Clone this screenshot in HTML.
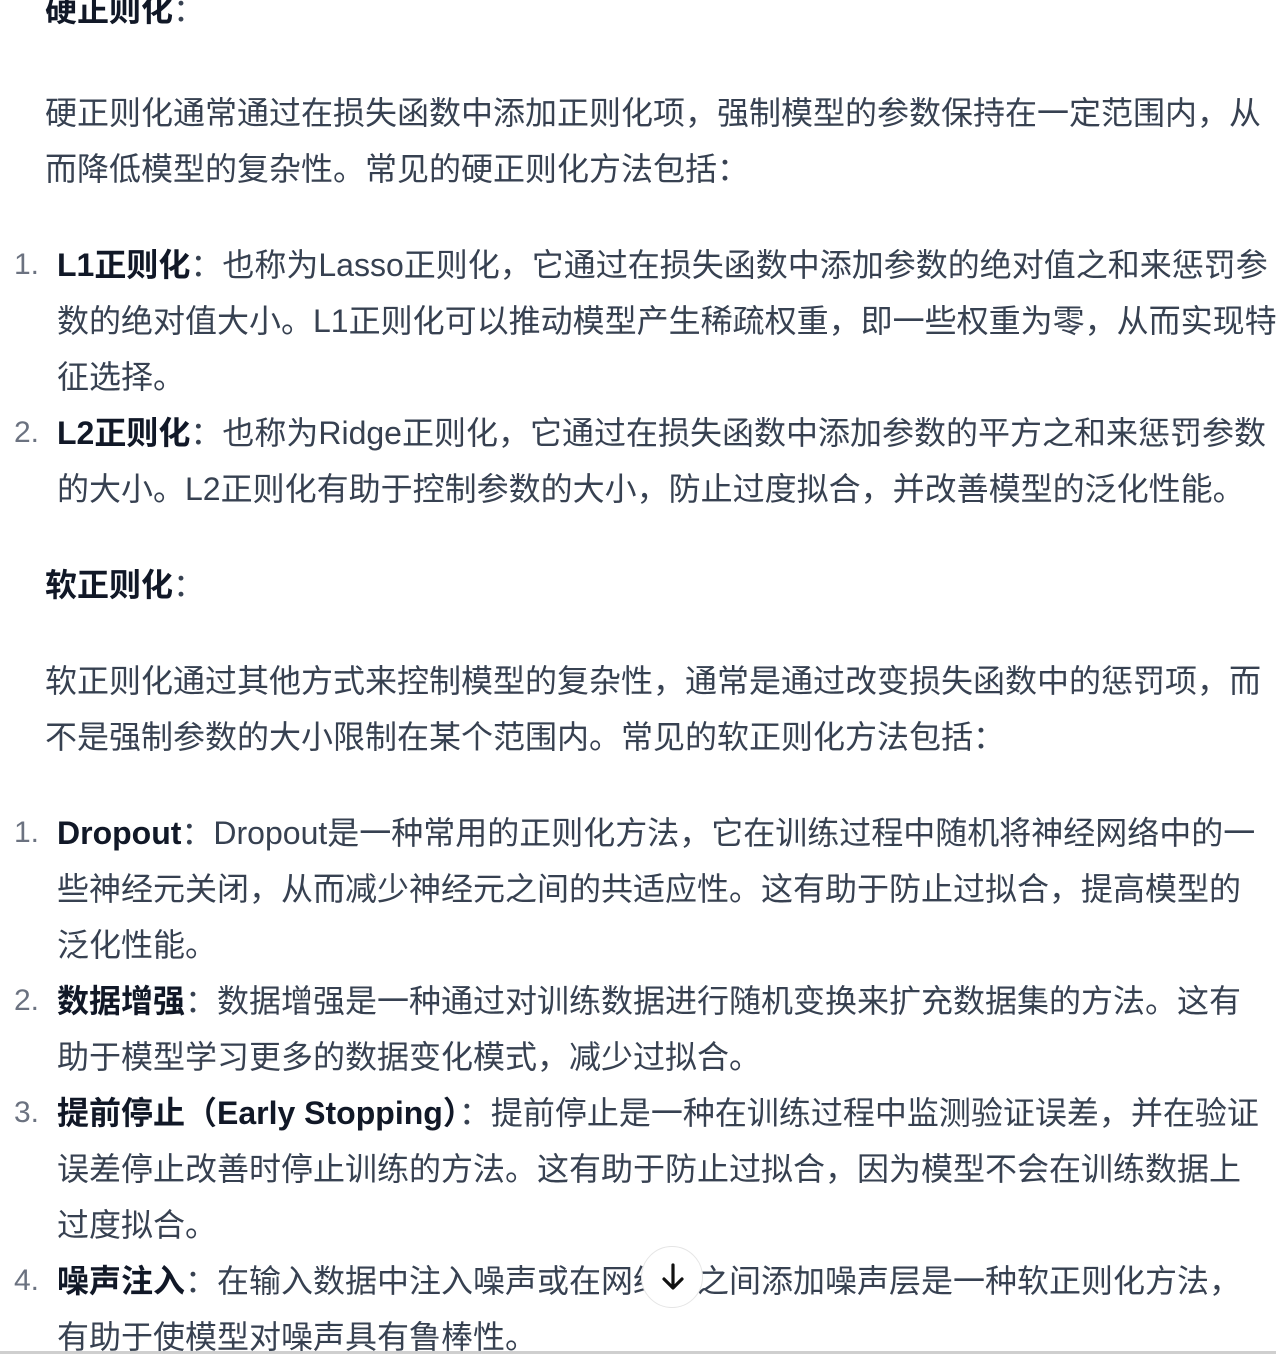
<!DOCTYPE html>
<html><head><meta charset="utf-8"><style>
html,body{margin:0;padding:0;background:#fff;width:1276px;height:1354px;overflow:hidden;position:relative}
.l{position:absolute;white-space:nowrap;height:56px;line-height:56px;font-size:32px;color:#374151;font-family:"Liberation Sans","Noto Sans CJK SC",sans-serif}
b{color:#111827;font-weight:700}
.n{position:absolute;left:14px;height:56px;line-height:56px;font-size:30px;color:#6b7280;font-family:"Liberation Sans",sans-serif}
.p{left:45px}.i{left:57px}
</style></head><body>
<div class="l p" style="top:-18px"><b>硬正则化</b>：</div>
<div class="l p" style="top:85px">硬正则化通常通过在损失函数中添加正则化项，强制模型的参数保持在一定范围内，从</div>
<div class="l p" style="top:141px">而降低模型的复杂性。常见的硬正则化方法包括：</div>
<div class="n" style="top:237px">1.</div>
<div class="l i" style="top:237px"><b>L1正则化</b>：也称为Lasso正则化，它通过在损失函数中添加参数的绝对值之和来惩罚参</div>
<div class="l i" style="top:293px">数的绝对值大小。L1正则化可以推动模型产生稀疏权重，即一些权重为零，从而实现特</div>
<div class="l i" style="top:349px">征选择。</div>
<div class="n" style="top:405px">2.</div>
<div class="l i" style="top:405px"><b>L2正则化</b>：也称为Ridge正则化，它通过在损失函数中添加参数的平方之和来惩罚参数</div>
<div class="l i" style="top:461px">的大小。L2正则化有助于控制参数的大小，防止过度拟合，并改善模型的泛化性能。</div>
<div class="l p" style="top:557px"><b>软正则化</b>：</div>
<div class="l p" style="top:653px">软正则化通过其他方式来控制模型的复杂性，通常是通过改变损失函数中的惩罚项，而</div>
<div class="l p" style="top:709px">不是强制参数的大小限制在某个范围内。常见的软正则化方法包括：</div>
<div class="n" style="top:805px">1.</div>
<div class="l i" style="top:805px"><b>Dropout</b>：Dropout是一种常用的正则化方法，它在训练过程中随机将神经网络中的一</div>
<div class="l i" style="top:861px">些神经元关闭，从而减少神经元之间的共适应性。这有助于防止过拟合，提高模型的</div>
<div class="l i" style="top:917px">泛化性能。</div>
<div class="n" style="top:973px">2.</div>
<div class="l i" style="top:973px"><b>数据增强</b>：数据增强是一种通过对训练数据进行随机变换来扩充数据集的方法。这有</div>
<div class="l i" style="top:1029px">助于模型学习更多的数据变化模式，减少过拟合。</div>
<div class="n" style="top:1085px">3.</div>
<div class="l i" style="top:1085px"><b>提前停止（Early Stopping）</b>：提前停止是一种在训练过程中监测验证误差，并在验证</div>
<div class="l i" style="top:1141px">误差停止改善时停止训练的方法。这有助于防止过拟合，因为模型不会在训练数据上</div>
<div class="l i" style="top:1197px">过度拟合。</div>
<div class="n" style="top:1253px">4.</div>
<div class="l i" style="top:1253px"><b>噪声注入</b>：在输入数据中注入噪声或在网络层之间添加噪声层是一种软正则化方法，</div>
<div class="l i" style="top:1309px">有助于使模型对噪声具有鲁棒性。</div>
<div style="position:absolute;left:641px;top:1246px;width:62px;height:62px;border-radius:50%;background:#fff;border:1px solid #e5e5e5;box-sizing:border-box">
<svg width="60" height="60" viewBox="0 0 60 60" style="position:absolute;left:0;top:0"><path d="M31 18v22M22 32l9 9 9-9" fill="none" stroke="#111" stroke-width="3.2" stroke-linecap="round" stroke-linejoin="round"/></svg></div>
<div style="position:absolute;left:0;top:1351px;width:1276px;height:3px;background:#cfcfcf"></div>
</body></html>
